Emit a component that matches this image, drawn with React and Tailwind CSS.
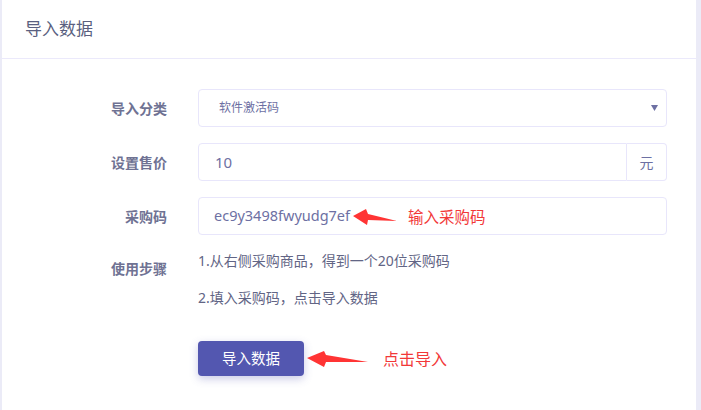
import React from "react";

const font = { fontFamily: '"Noto Sans", "Noto Sans CJK SC", sans-serif' };

const Arrow = ({ w, h, points }) => (
  <svg width={w} height={h} viewBox={`0 0 ${w} ${h}`} className="shrink-0">
    <polygon points={points} fill="#ff3434" />
  </svg>
);

const Label = ({ children, className = "" }) => (
  <div className={"w-[165px] shrink-0 text-right text-[14px] font-bold text-[#6f7293] " + className}>{children}</div>
);

export default function App() {
  return (
    <div className="w-[701px] h-[410px] bg-[#ebebf7] pl-[2px] pr-[5px] overflow-hidden" style={font}>
      <div className="h-full bg-white">
        <div className="h-[59px] border-b border-[#ebe9fb] pl-[23px] pt-[17px]">
          <h1 className="text-[17px] leading-[24px] text-[#5a5f80]">导入数据</h1>
        </div>

        <div className="pt-[30px] flex flex-col gap-[16px]">
          <div className="flex items-center">
            <Label>导入分类</Label>
            <div className="ml-[31px] w-[469px] h-[38px] border border-[#e8e6fb] rounded-[4px] flex items-center justify-between pl-[20px] pr-[8px]">
              <span className="text-[12px] text-[#6d70a3]">软件激活码</span>
              <svg width="7" height="6" viewBox="0 0 7 6"><polygon points="0,0 7,0 3.5,6" fill="#6d70a3" /></svg>
            </div>
          </div>

          <div className="flex items-center">
            <Label>设置售价</Label>
            <div className="ml-[31px] w-[469px] h-[38px] flex">
              <div className="flex-1 border border-[#e8e6fb] rounded-l-[4px] flex items-center pl-[16px] text-[15px] text-[#6d70a3]">10</div>
              <div className="w-[40px] border border-l-0 border-[#e8e6fb] rounded-r-[4px] flex items-center justify-center text-[14px] text-[#6d70a3]">元</div>
            </div>
          </div>

          <div className="flex items-center">
            <Label>采购码</Label>
            <div className="ml-[31px] w-[469px] h-[38px] border border-[#e8e6fb] rounded-[4px] flex items-center pl-[15px]">
              <span className="text-[14.5px] text-[#6d70a3]">ec9y3498fwyudg7ef</span>
              <div className="ml-[3px] mt-[2px]">
                <Arrow w={44} h={18} points="0,8 13,1 15,6 44,13 15,12 14,17" />
              </div>
              <span className="ml-[11px] mt-[3px] text-[15.5px] text-[#f23838]">输入采购码</span>
            </div>
          </div>

          <div className="flex items-start">
            <Label className="pt-[7px]">使用步骤</Label>
            <div className="ml-[31px] text-[14px] leading-[20px] text-[#626585]">
              <p>1.从右侧采购商品，得到一个20位采购码</p>
              <p className="mt-[17px]">2.填入采购码，点击导入数据</p>
            </div>
          </div>

          <div className="flex items-center mt-[17px]">
            <div className="w-[165px] shrink-0" />
            <button className="ml-[31px] w-[106px] h-[35px] rounded-[4px] bg-[#5357b0] text-white text-[14.5px] shadow-[0_3px_8px_rgba(83,87,176,0.3)]">导入数据</button>
            <div className="ml-[3px] mt-[1px]">
              <Arrow w={61} h={18} points="0,8 17,1 19,5 61,12 19,12 17,17" />
            </div>
            <span className="ml-[15px] text-[16px] text-[#f23838]">点击导入</span>
          </div>
        </div>
      </div>
    </div>
  );
}
